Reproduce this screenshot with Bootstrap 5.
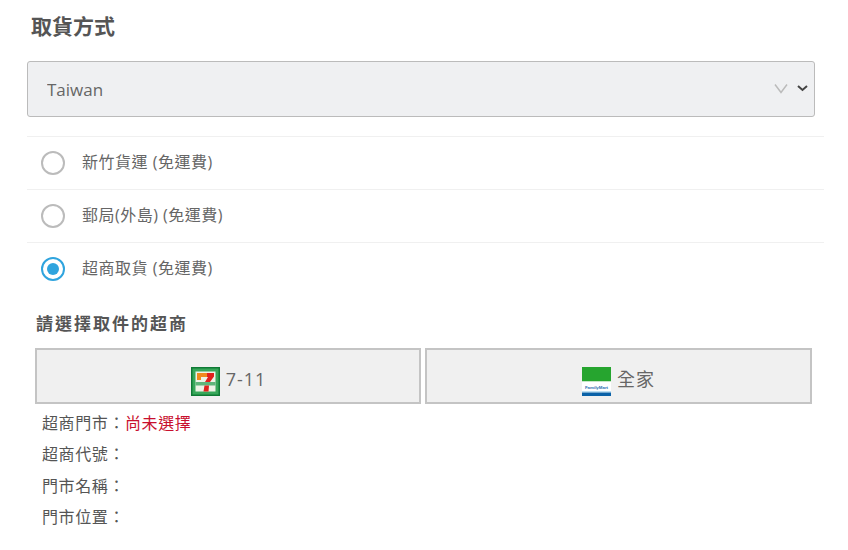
<!DOCTYPE html>
<html lang="zh-Hant">
<head>
<meta charset="utf-8">
<title>取貨方式</title>
<link href="https://cdn.jsdelivr.net/npm/bootstrap@5.3.0/dist/css/bootstrap.min.css" rel="stylesheet">
<style>
body{background:#fff;color:#555;font-family:"Open Sans","Noto Sans CJK TC",sans-serif;overflow:hidden}
.page-wrap{width:797px;margin-left:27px}
.ship-title{font-size:21px;font-weight:700;line-height:28px;letter-spacing:0;color:#555;margin:12px 0 21px 4px}
.country-select{width:788px;height:56px;border:1px solid #bbb;border-radius:3px;background-color:#eff0f2;color:#666;font-size:17px;padding:2px 50px 0 19px;
background-image:url("data:image/svg+xml,%3Csvg xmlns='http://www.w3.org/2000/svg' width='36' height='12' viewBox='0 0 36 12'%3E%3Cpath d='M1 1.500l6 8 6-8' fill='none' stroke='%23bbb' stroke-width='1.500'/%3E%3Cpath d='M24 3l4.500 4 4.500-4' fill='none' stroke='%23444' stroke-width='2'/%3E%3C/svg%3E");
background-position:right 4px center;background-size:36px 12px;background-repeat:no-repeat}
.ship-list{margin-top:19px}
.ship-row{height:53px;border-top:1px solid #f0f0f0;padding-left:14px;gap:17px;font-size:16px;letter-spacing:.5px;color:#666}
.ship-row .row-text{position:relative;top:-1px}
.ship-row .dot{width:24px;height:24px;border-radius:50%;border:2px solid #bbb;flex:none;background:#fff}
.ship-row .dot.on{border-color:#2fa4de;position:relative}
.ship-row .dot.on::after{content:"";position:absolute;inset:4px;border-radius:50%;background:#2fa4de}
.store-title{font-size:17px;font-weight:700;letter-spacing:2px;line-height:24px;margin:17px 0 12px 9px;color:#555}
.store-btns{margin-left:8px;gap:4px;width:777px}
.store-btn{flex:1;height:56px;border:2px solid #c4c4c4;background:#f0f0f0;color:#666;font-size:18px;letter-spacing:1px;gap:6px;padding:6px 0 0;border-radius:0}
.store-btn:first-child{flex:none;width:386px;padding-left:1px}
.store-btn svg{margin-top:4px}
.fm-word{font-family:"Liberation Sans",sans-serif;font-size:4.400px;font-weight:700;letter-spacing:0;fill:#2a6cb0}
.store-info{margin:4px 0 0 15px;font-size:16px;letter-spacing:.6px;color:#555}
.store-info div{height:31.300px;line-height:31px}
.store-none{color:#c8102e}
</style>
</head>
<body>
<div class="page-wrap">
  <h2 class="ship-title">取貨方式</h2>
  <select class="form-select country-select"><option>Taiwan</option></select>
  <div class="ship-list">
    <label class="ship-row d-flex align-items-center"><span class="dot"></span><span class="row-text">新竹貨運 (免運費)</span></label>
    <label class="ship-row d-flex align-items-center"><span class="dot"></span><span class="row-text">郵局(外島) (免運費)</span></label>
    <label class="ship-row d-flex align-items-center"><span class="dot on"></span><span class="row-text">超商取貨 (免運費)</span></label>
  </div>
  <div class="store-title">請選擇取件的超商</div>
  <div class="store-btns d-flex">
    <button type="button" class="btn store-btn d-flex align-items-center justify-content-center">
      <svg width="29" height="29" viewBox="0 0 29 29"><rect width="29" height="29" fill="#0f7a35"/><rect x="1.500" y="1.500" width="26" height="26" fill="#38a75a"/><rect x="4.500" y="4.500" width="20" height="20" fill="#eef3e6"/><path d="M6 6h10v4H10v3H6z" fill="#f08a1d"/><path d="M16 6h7v3.500l-4 5.500H14l3-5h-1z" fill="#e0201c"/><rect x="4.500" y="15" width="20" height="3.500" fill="#5fb57a"/><path d="M13.500 18.500H18l-.5 6h-5z" fill="#e0201c"/></svg>
      <span>7-11</span>
    </button>
    <button type="button" class="btn store-btn d-flex align-items-center justify-content-center">
      <svg width="29" height="29" viewBox="0 0 29 29"><rect width="29" height="14.500" fill="#26a52f"/><rect y="14.500" width="29" height="14.500" fill="#fff"/><text class="fm-word" x="14.500" y="21.500" text-anchor="middle">FamilyMart</text><rect y="24" width="29" height="1.500" fill="#bcdff2"/><rect y="25.500" width="29" height="3.500" fill="#0b62a8"/></svg>
      <span>全家</span>
    </button>
  </div>
  <div class="store-info">
    <div>超商門市：<span class="store-none">尚未選擇</span></div>
    <div>超商代號：</div>
    <div>門市名稱：</div>
    <div>門市位置：</div>
  </div>
</div>
<script src="https://cdn.jsdelivr.net/npm/bootstrap@5.3.0/dist/js/bootstrap.bundle.min.js"></script>
</body>
</html>
